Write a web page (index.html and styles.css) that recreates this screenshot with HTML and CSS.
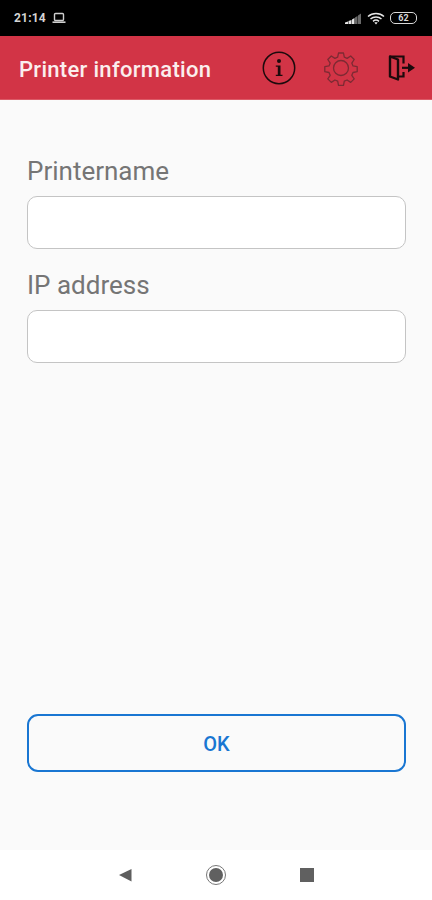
FILE: index.html
```html
<!DOCTYPE html>
<html lang="en">
<head>
<meta charset="utf-8">
<title>Printer information</title>
<link rel="stylesheet" href="styles.css">
</head>
<body>
<div class="screen">
  <div class="statusbar">
    <div class="status-left">
      <span class="clock">21:14</span>
      <svg class="laptop" width="14" height="12" viewBox="0 0 14 12"><rect x="2.500" y="1.500" width="9" height="7" rx="1" fill="none" stroke="#cfcfcf" stroke-width="1.400"/><rect x="0.500" y="9.400" width="13" height="1.600" fill="#cfcfcf"/></svg>
    </div>
    <div class="status-right">
      <svg width="18" height="14" viewBox="0 0 18 14"><path d="M1 11.500 4 10.500V13H1zM4.500 10 7.500 9V13h-3zM8 8.500 10.500 7V13H8z" fill="#e6e6e6"/><path d="M11 6.500 13.500 5V13H11zM14 4.500 17 2.500V13h-3z" fill="#6a6a6a"/></svg>
      <svg width="18" height="13" viewBox="0 0 18 13"><path d="M1 4.500C5.500 .5 12.500 .5 17 4.500M3.500 7C6.500 4.300 11.500 4.300 14.500 7M6 9.300C7.800 7.800 10.200 7.800 12 9.300" fill="none" stroke="#e8e8e8" stroke-width="1.500"/><path d="M9 12.500 7.300 10.600C8.300 10 9.700 10 10.700 10.600z" fill="#e8e8e8"/></svg>
      <span class="battery"><span class="battery-num">62</span></span>
    </div>
  </div>
  <header class="appbar">
    <h1 class="title">Printer information</h1>
    <div class="actions">
      <svg class="icon" width="34" height="34" viewBox="0 0 34 34"><circle cx="17" cy="17" r="15.700" fill="none" stroke="#1c0a0c" stroke-width="1.500"/><circle cx="17" cy="10" r="2" fill="#1c0a0c"/><path d="M13.800 14.500h4.700v9.300h2v1.300h-6.700v-1.300h2v-8h-2z" fill="#1c0a0c"/></svg>
      <svg class="icon" width="38" height="36" viewBox="0 0 38 36"><g fill="none" stroke="#7d2a33" stroke-width="1.300" stroke-linejoin="round"><circle cx="19" cy="18" r="7.500"/><path d="M16.500 3h5l.8 4.200 2.800 1.200 3.600-2.400 3.500 3.500-2.400 3.600 1.200 2.800 4.200.8v5l-4.200.8-1.200 2.800 2.400 3.600-3.500 3.500-3.600-2.400-2.800 1.200-.8 4.200h-5l-.8-4.200-2.800-1.200-3.600 2.400-3.500-3.500 2.400-3.600-1.200-2.800-4.200-.8v-5l4.200-.8 1.200-2.800-2.400-3.600 3.500-3.500 3.600 2.400 2.800-1.200z"/></g></svg>
      <svg class="icon icon-exit" width="28" height="26" viewBox="0 0 28 26"><path d="M2 1.500h13.500v7M15.500 17v4.500H10" fill="none" stroke="#1c0a0c" stroke-width="2.200"/><path d="M2 1.500 10 4.500V24.500L2 21.500z" fill="none" stroke="#1c0a0c" stroke-width="2.400" stroke-linejoin="round"/><path d="M14 12.800h6" stroke="#1c0a0c" stroke-width="2.200"/><path d="M20 8l7 4.800L20 17.600z" fill="#1c0a0c"/></svg>
    </div>
  </header>
  <main class="content">
    <form class="form">
      <label class="field">
        <span class="label">Printername</span>
        <input class="input" type="text">
      </label>
      <label class="field">
        <span class="label">IP address</span>
        <input class="input" type="text">
      </label>
    </form>
    <button class="ok" type="button">OK</button>
  </main>
  <nav class="navbar">
    <svg width="14" height="14" viewBox="0 0 14 14"><path d="M1 7 13.500 1v12.500z" fill="#5e5e5e"/></svg>
    <svg width="22" height="22" viewBox="0 0 22 22"><circle cx="11" cy="11" r="9.500" fill="none" stroke="#777" stroke-width="1"/><circle cx="11" cy="11" r="7" fill="#606060"/></svg>
    <svg width="14" height="14" viewBox="0 0 14 14"><rect width="14" height="14" fill="#606060"/></svg>
  </nav>
</div>
</body>
</html>
```
FILE: styles.css
```css
* { box-sizing: border-box; }
html, body { margin: 0; padding: 0; }
body { font-family: Roboto, "Liberation Sans", sans-serif; background: #fafafa; }
.screen { width: 432px; height: 900px; display: flex; flex-direction: column; overflow: hidden; }
.statusbar { height: 36px; flex: none; background: #000; display: flex; justify-content: space-between; align-items: center; padding: 0 15px 0 14px; }
.status-left { display: flex; align-items: center; gap: 6px; }
.clock { color: #d4d4d4; font-size: 12px; font-weight: 700; letter-spacing: .2px; }
.status-right { display: flex; align-items: center; gap: 5px; }
.battery { width: 27px; height: 12px; border: 1.400px solid #d8d8d8; border-radius: 5px; display: flex; align-items: center; justify-content: center; }
.battery-num { color: #d8d8d8; font-size: 9px; font-weight: 700; line-height: 1; }
.appbar { height: 64px; flex: none; background: #d23446; display: flex; align-items: center; justify-content: space-between; padding: 0 16px 0 19px; border-bottom: 1px solid #dc5a67; }
.title { margin: 3px 0 0; color: #fbeeee; font-size: 22px; font-weight: 500; letter-spacing: .3px; }
.actions { display: flex; align-items: center; gap: 26px; }
.icon { display: block; }
.icon-exit { margin-left: 2px; }
.content { flex: 1; display: flex; flex-direction: column; justify-content: space-between; padding: 55px 26px 78px 27px; }
.form { display: flex; flex-direction: column; gap: 20px; }
.field { display: flex; flex-direction: column; gap: 9px; }
.label { color: #757575; font-size: 26px; line-height: 32px; }
.input { display: block; width: 100%; height: 53px; background: #fff; border: 1.500px solid #c4c4c4; border-radius: 10px; outline: none; }
.ok { width: 100%; height: 58px; padding-top: 3px; background: transparent; border: 2px solid #1976d2; border-radius: 11px; color: #1976d2; font-family: inherit; font-size: 20px; font-weight: 500; }
.navbar { height: 50px; flex: none; background: #fff; display: flex; align-items: center; justify-content: center; gap: 73px; }
```
